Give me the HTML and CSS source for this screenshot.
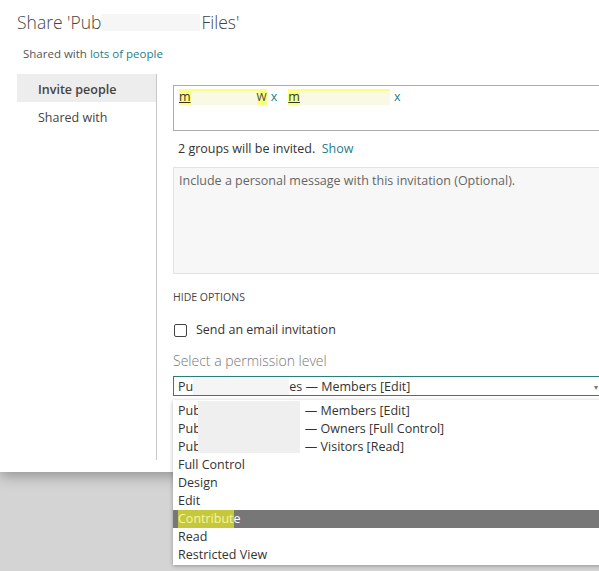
FILE: index.html
```html
<!DOCTYPE html>
<html>
<head>
<meta charset="utf-8">
<link rel="stylesheet" href="styles.css">
</head>
<body>
<div class="dialog">
  <h1 class="title">Share 'Pub<span class="redact title-redact"></span>Files'</h1>
  <div class="shared">Shared with <a class="link">lots of people</a></div>
  <div class="body">
    <nav class="nav">
      <div class="nav-item active">Invite people</div>
      <div class="nav-item">Shared with</div>
    </nav>
    <main class="content">
      <div class="people-box">
        <span class="token token1"><u class="tok-m">m</u><span class="tok-redact tr1"></span><span class="tok-w">W</span></span><span class="tok-x">x</span>
        <span class="token token2"><u class="tok-m">m</u><span class="tok-redact tr2"></span></span><span class="tok-x">x</span>
      </div>
      <div class="groups">2 groups will be invited.&nbsp; <a class="link">Show</a></div>
      <div class="message">Include a personal message with this invitation (Optional).</div>
      <div class="hide-options">HIDE OPTIONS</div>
      <label class="check-row"><span class="checkbox"></span>Send an email invitation</label>
      <div class="perm-label">Select a permission level</div>
      <div class="select"><span class="sel-text">Pu<span class="redact sel-redact"></span>es — Members [Edit]</span><span class="sel-arrow">▾</span></div>
    </main>
  </div>
</div>
<div class="dropdown">
  <ul class="options">
    <li class="opt">Pub<span class="list-gap"></span>— Members [Edit]</li>
    <li class="opt">Pub<span class="list-gap"></span>— Owners [Full Control]</li>
    <li class="opt">Pub<span class="list-gap"></span>— Visitors [Read]</li>
    <li class="opt">Full Control</li>
    <li class="opt">Design</li>
    <li class="opt">Edit</li>
    <li class="opt selected"><span class="hl">Contribut</span>e</li>
    <li class="opt">Read</li>
    <li class="opt">Restricted View</li>
  </ul>
  <div class="list-redact"></div>
</div>
</body>
</html>
```

FILE: styles.css
```css
html, body {
  margin: 0;
  padding: 0;
  overflow: hidden;
}
body {
  width: 599px;
  height: 571px;
  background: #d4d4d4;
  font-family: "Open Sans", "Noto Sans", sans-serif;
  color: #333;
  position: relative;
}
.dialog {
  background: #fff;
  width: 720px;
  height: 472px;
  box-shadow: 0 3px 14px rgba(0, 0, 0, 0.35);
  box-sizing: border-box;
  padding-left: 17px;
}
.title {
  margin: 0;
  padding-top: 6px;
  font-size: 17.5px;
  font-weight: 300;
  color: #444;
  line-height: 26px;
  height: 32px;
  display: flex;
  align-items: center;
}
.redact {
  display: inline-block;
  background: #f6f6f6;
}
.title-redact {
  width: 99px;
  height: 17px;
  margin: 0 1px 0 0;
}
.shared {
  margin-top: 8px;
  padding-left: 6px;
  font-size: 11.5px;
  color: #555;
  line-height: 16px;
  height: 28px;
}
.link {
  color: #1f7d8a;
  text-decoration: none;
}
.body {
  display: flex;
}
.nav {
  flex: 0 0 139px;
  height: 386px;
  border-right: 1px solid #c8c8c8;
}
.nav-item {
  height: 28px;
  box-sizing: border-box;
  padding-top: 3px;
  line-height: 25px;
  padding-left: 21px;
  font-size: 12.5px;
  color: #444;
}
.nav-item.active {
  background: #ededed;
  font-weight: 600;
}
.content {
  flex: 0 0 auto;
  padding: 11px 0 0 16px;
  width: 560px;
}
.people-box {
  height: 46px;
  box-sizing: border-box;
  border: 1px solid #ababab;
  padding: 3px 0 0 5px;
  font-size: 12.5px;
  line-height: 16px;
  display: flex;
  align-items: flex-start;
}
.token {
  display: inline-flex;
  align-items: center;
  background: #fbff80;
  height: 16px;
  color: #333;
}
.tok-m {
  text-decoration-color: #333;
}
.tok-redact {
  display: inline-block;
  height: 14px;
  margin-top: 2px;
  background: #f9f9e6;
}
.tr1 { width: 66px; }
.tr2 { width: 90px; }
.tok-w { color: #444; font-size: 11px; }
.tok-x {
  color: #1f7d8a;
  margin: 0 11px 0 4px;
}
.groups {
  margin-top: 9px;
  padding-left: 5px;
  font-size: 12.5px;
  color: #333;
  line-height: 18px;
}
.message {
  margin-top: 9px;
  height: 107px;
  box-sizing: border-box;
  background: #f7f7f7;
  border: 1px solid #e2e2e2;
  padding: 4px 5px;
  font-size: 12.5px;
  line-height: 18px;
  color: #666;
}
.hide-options {
  margin-top: 16px;
  font-size: 10.5px;
  color: #444;
  line-height: 14px;
}
.check-row {
  display: flex;
  align-items: center;
  margin-top: 17px;
  font-size: 12.5px;
  color: #333;
  line-height: 18px;
}
.checkbox {
  width: 11px;
  height: 11px;
  border: 1px solid #444;
  border-radius: 2px;
  margin: 0 9px 0 1px;
}
.perm-label {
  margin-top: 12px;
  font-size: 14px;
  font-weight: 300;
  color: #777;
  line-height: 20px;
}
.select {
  margin-top: 5px;
  height: 20px;
  box-sizing: border-box;
  border: 1.5px solid #2a7f7b;
  display: flex;
  align-items: center;
  justify-content: space-between;
  font-size: 12.5px;
  color: #333;
  width: 428px;
  padding-left: 4px;
  padding-right: 2px;
}
.sel-text {
  display: flex;
  align-items: center;
}
.sel-redact {
  width: 96px;
  height: 17px;
  background: #f5f5f5;
}
.sel-arrow {
  font-size: 8px;
  color: #777;
}
.dropdown {
  position: absolute;
  left: 173px;
  top: 400px;
  width: 440px;
  background: #fff;
  box-shadow: 0 1px 4px rgba(0, 0, 0, 0.3);
}
.options {
  margin: 0;
  padding: 2px 0 1px;
  list-style: none;
}
.list-redact {
  position: absolute;
  left: 25px;
  top: 1px;
  width: 102px;
  height: 52px;
  background: #efefef;
}
.opt {
  height: 18px;
  line-height: 18px;
  padding-left: 5px;
  font-size: 12.5px;
  color: #333;
  display: flex;
  align-items: center;
  white-space: pre;
}
.list-gap {
  display: inline-block;
  width: 104px;
}
.opt.selected {
  background: #777;
  color: #fff;
}
.hl {
  background: #c6c83c;
  color: #f4f6a0;
}
```
